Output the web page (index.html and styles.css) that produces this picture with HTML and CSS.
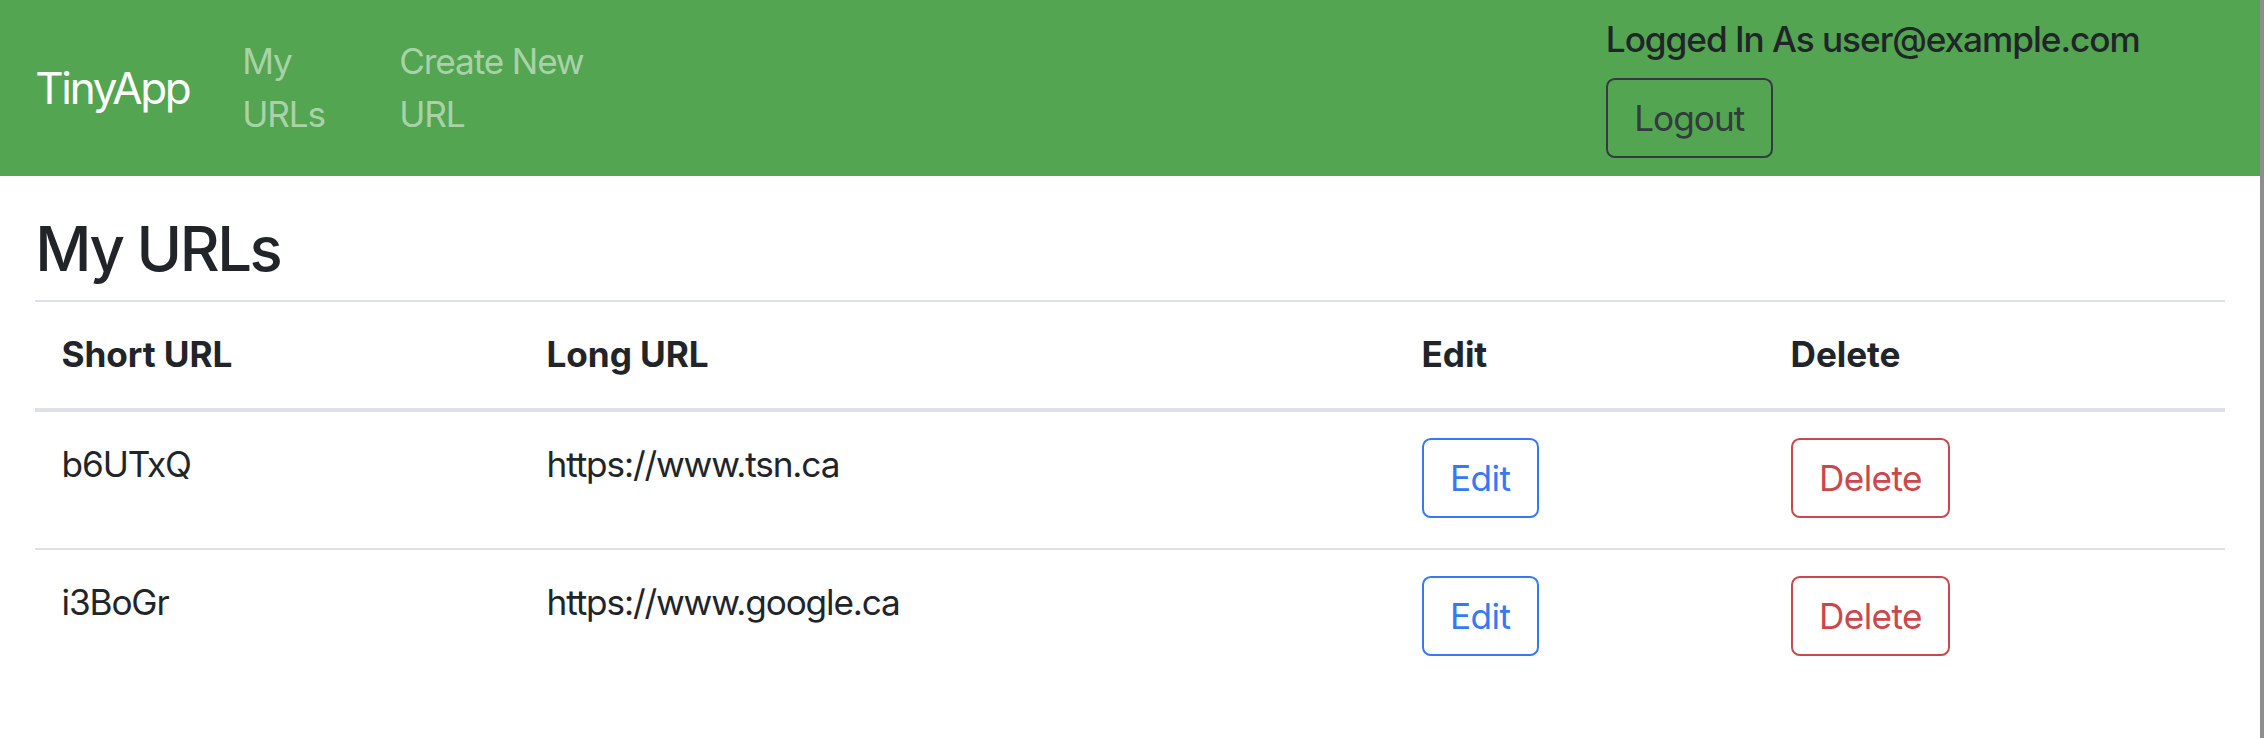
FILE: index.html
```html
<!DOCTYPE html>
<html lang="en">
<head>
<meta charset="utf-8">
<title>TinyApp</title>
<link rel="stylesheet" href="styles.css">
</head>
<body>
<div class="page">
  <nav class="navbar">
    <a class="brand" href="#">TinyApp</a>
    <ul class="nav-links">
      <li><a class="nav-link nav-link-urls" href="#">My URLs</a></li>
      <li><a class="nav-link nav-link-new" href="#">Create New URL</a></li>
    </ul>
    <div class="account">
      <h6 class="account-name">Logged In As user@example.com</h6>
      <button class="btn btn-dark-outline" type="button">Logout</button>
    </div>
  </nav>
  <main class="content">
    <h3 class="page-title">My URLs</h3>
    <table class="url-table">
      <colgroup>
        <col class="col-short">
        <col class="col-long">
        <col class="col-edit">
        <col class="col-delete">
      </colgroup>
      <thead>
        <tr>
          <th>Short URL</th>
          <th>Long URL</th>
          <th>Edit</th>
          <th>Delete</th>
        </tr>
      </thead>
      <tbody>
        <tr>
          <td>b6UTxQ</td>
          <td>https://www.tsn.ca</td>
          <td><button class="btn btn-blue-outline" type="button">Edit</button></td>
          <td><button class="btn btn-red-outline" type="button">Delete</button></td>
        </tr>
        <tr>
          <td>i3BoGr</td>
          <td>https://www.google.ca</td>
          <td><button class="btn btn-blue-outline" type="button">Edit</button></td>
          <td><button class="btn btn-red-outline" type="button">Delete</button></td>
        </tr>
      </tbody>
    </table>
  </main>
</div>
</body>
</html>
```

FILE: styles.css
```css
* {
  box-sizing: border-box;
}

html, body {
  margin: 0;
  padding: 0;
  background: #ffffff;
}

body {
  font-family: Inter, "Noto Sans", "Liberation Sans", sans-serif;
  font-size: 35.2px;
  line-height: 52.8px;
  letter-spacing: -1.15px;
  color: #212529;
}

.page {
  min-height: 738px;
  border-right: 4px solid #8e8e8e;
}

/* Navbar */
.navbar {
  display: flex;
  align-items: center;
  padding: 17.6px 35.2px;
  background: #53a551;
}

.brand {
  display: block;
  font-size: 44px;
  line-height: 66px;
  letter-spacing: -2.3px;
  padding: 11px 0;
  margin-right: 35.2px;
  color: #ffffff;
  text-decoration: none;
  white-space: nowrap;
}

.nav-links {
  display: flex;
  list-style: none;
  margin: 0;
  padding: 0;
}

.nav-link {
  display: block;
  padding: 17.6px;
  color: #a9d2a8;
  text-decoration: none;
}

.nav-link-urls {
  width: 157px;
}

.nav-link-new {
  width: 240px;
}

.account {
  margin-left: auto;
  width: 619px;
}

.account-name {
  margin: 0 0 17.6px;
  font-size: 35.2px;
  font-weight: 500;
  line-height: 42.2px;
  letter-spacing: -1.05px;
  color: #212529;
  white-space: nowrap;
}

/* Buttons */
.btn {
  display: inline-block;
  font-family: inherit;
  font-size: 35.2px;
  font-weight: 400;
  line-height: 52px;
  letter-spacing: -0.6px;
  padding: 12px 26.4px;
  border: 2px solid transparent;
  border-radius: 8.8px;
  background: transparent;
  cursor: pointer;
}

.btn-dark-outline {
  color: #353a40;
  border-color: #353a40;
  letter-spacing: -1px;
}

.btn-blue-outline {
  color: #3579f6;
  border-color: #3579f6;
}

.btn-red-outline {
  color: #cb474b;
  border-color: #cb474b;
}

/* Content */
.content {
  padding: 36px 35.2px 0;
}

.page-title {
  margin: 0 0 14px;
  font-size: 61.6px;
  font-weight: 500;
  line-height: 74px;
  letter-spacing: -2.4px;
  color: #212529;
}

.url-table {
  width: 100%;
  table-layout: fixed;
  border-collapse: separate;
  border-spacing: 0;
}

.col-short { width: 485px; }
.col-long { width: 875px; }
.col-edit { width: 369px; }

.url-table th {
  text-align: left;
  font-weight: 700;
  letter-spacing: -0.1px;
  padding: 26.4px;
  border-top: 2px solid #dee2e6;
  border-bottom: 4px solid #dee2e6;
  vertical-align: bottom;
}

.url-table td {
  padding: 26.4px 26.4px 30px;
  vertical-align: top;
}

.url-table tbody tr + tr td {
  border-top: 2px solid #dee2e6;
}
```
